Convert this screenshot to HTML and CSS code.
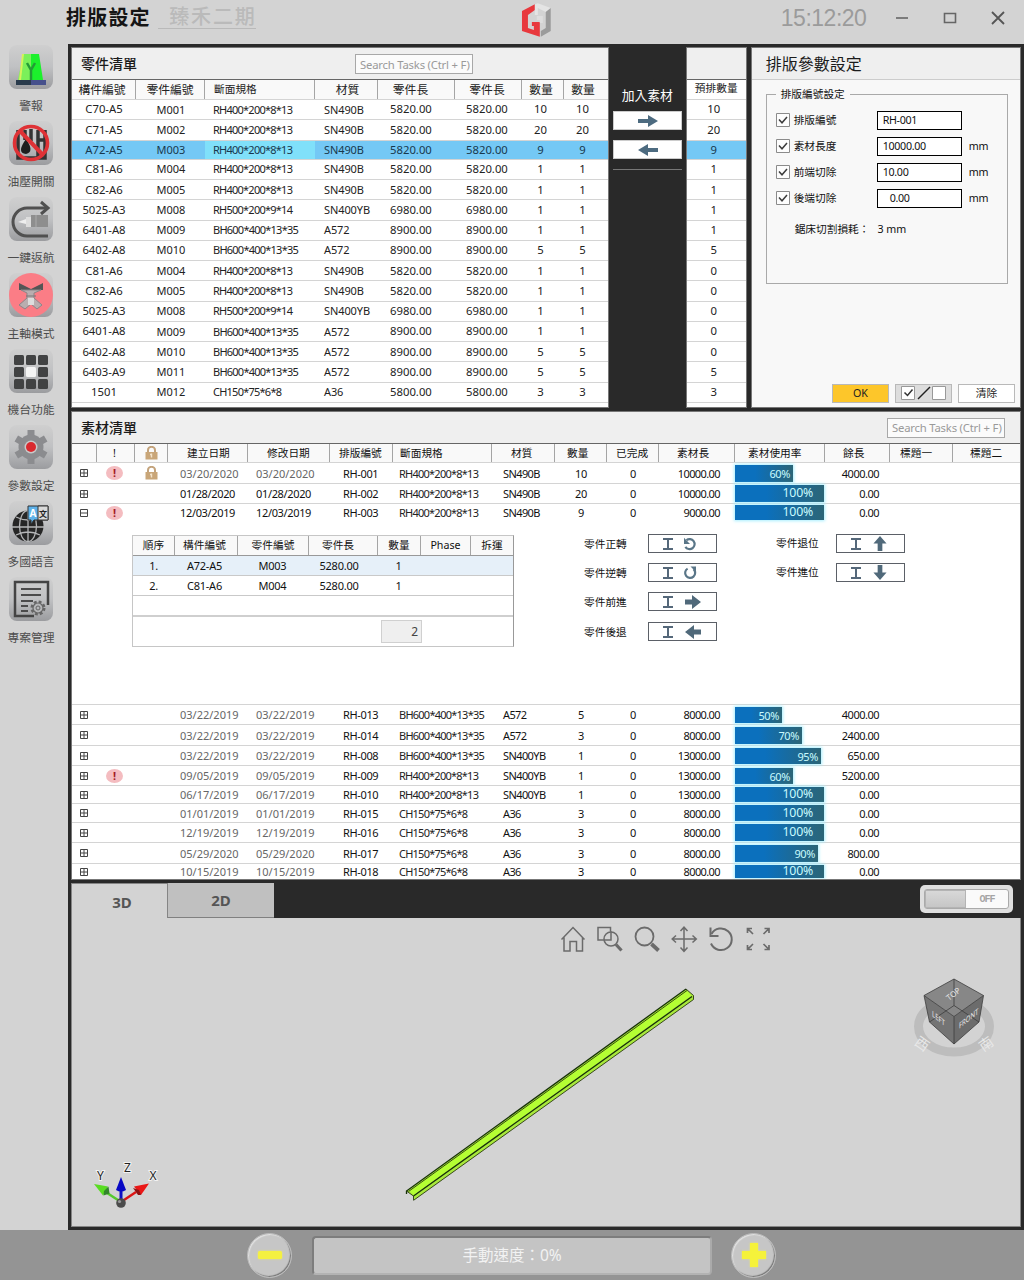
FILE: index.html
```html
<!DOCTYPE html>
<html lang="zh-Hant">
<head>
<meta charset="utf-8">
<title>排版設定</title>
<link rel="stylesheet" href="styles.css">
</head>
<body>
<svg class="defs" aria-hidden="true">
  <defs>
    <linearGradient id="chip" x1="0" y1="0" x2="0" y2="1"><stop offset="0" stop-color="#cfcfcf"/><stop offset=".5" stop-color="#c0c1c3"/><stop offset="1" stop-color="#9b9c9f"/></linearGradient>
    <symbol id="plus" viewBox="0 0 8 8"><path d="M.5 .5h7v7h-7zM.5 4h7M4 .5v7" fill="none" stroke="#444" stroke-width="1"/></symbol>
    <symbol id="minus" viewBox="0 0 8 8"><path d="M.5 .5h7v7h-7zM.5 4h7" fill="none" stroke="#444" stroke-width="1"/></symbol>
    <symbol id="lock" viewBox="0 0 13 14"><path d="M3 7V4a3.5 3.2 0 0 1 7 0v3" fill="none" stroke="#c3a37c" stroke-width="2"/><path d="M.5 6h12v7.5H.5z" fill="#c9a679"/><path d="M6.5 7.5v4M5 8.5h1.5" stroke="#f3e3cb" stroke-width="1.4"/></symbol>
    <symbol id="right" viewBox="0 0 20 12"><path d="M0 4h10V0l10 6-10 6V8H0z" fill="#4d6b80"/></symbol>
    <symbol id="left" viewBox="0 0 20 12"><path d="M20 4H10V0L0 6l10 6V8h10z" fill="#4d6b80"/></symbol>
    <symbol id="beam" viewBox="0 0 10 12"><path d="M0 1h10M0 11h10M5 1v10" fill="none" stroke="#55687a" stroke-width="2"/></symbol>
    <symbol id="ccw" viewBox="0 0 14 14"><path d="M3.500 3.200A5 5 0 1 1 2.400 9.800" fill="none" stroke="#5a7688" stroke-width="2.200"/><path d="M1 .8V7h6z" fill="#5a7688"/></symbol>
    <symbol id="cw" viewBox="0 0 14 14"><path d="M10.500 3.200A5 5 0 1 1 4.600 2.600" fill="none" stroke="#5a7688" stroke-width="2.200"/><path d="M7.500 .5H13v5.400z" fill="#5a7688"/></symbol>
    <symbol id="fwd" viewBox="0 0 16 14"><path d="M0 4.500h7V0l9 7-9 7V9.500H0z" fill="#50697a"/></symbol>
    <symbol id="back" viewBox="0 0 16 14"><path d="M16 4.500H9V0L0 7l9 7V9.500h7z" fill="#50697a"/></symbol>
    <symbol id="up" viewBox="0 0 14 16"><path d="M4.500 16V8H0l7-8 7 8H9.500v8z" fill="#50697a"/></symbol>
    <symbol id="down" viewBox="0 0 14 16"><path d="M4.500 0v8H0l7 8 7-8H9.500V0z" fill="#50697a"/></symbol>
    <symbol id="tick" viewBox="0 0 14 14"><path d="M.5 .5h13v13H.5z" fill="#fdfdfd" stroke="#8b8b8b"/><path d="M3 6.500l3 3.300 5-5.800" fill="none" stroke="#3c3c3c" stroke-width="1.500"/></symbol>
  </defs>
</svg>

<header class="titlebar">
  <h1>排版設定</h1>
  <span class="project">臻禾二期</span>
  <svg class="logo" viewBox="0 0 31 35"><path d="M14 1 1 8v20l18 6V19h-8v4h2v4l-6-2V12l7-5z" fill="#e8383d"/><path d="M14 1l3-1 13 5-5 4-8-4v7h-3z" fill="#e4e4e4"/><path d="M30 5v23l-10 6v-6l5-3V9z" fill="#9b9b9b"/><path d="M16 13h6v7h-3v-3h-3z" fill="#dedede"/></svg>
  <time class="clock">15:12:20</time>
  <svg class="winctl" viewBox="0 0 110 16"><path d="M0 8h12" stroke="#666" stroke-width="1.600"/><path d="M48.500 3.500h11v9h-11z" fill="none" stroke="#666" stroke-width="1.600"/><path d="M96 2l12 12M108 2L96 14" stroke="#555" stroke-width="1.800"/></svg>
</header>

<div class="workspace">
  <nav class="sidebar">
    <a><svg viewBox="0 0 44 44"><rect width="44" height="44" rx="8" fill="url(#chip)"/><path d="M14 9h8v26H9z" fill="#7bf05a"/><path d="M22 9h8l4 26H22z" fill="#1cf02c"/><path d="M14 9l-3 26" stroke="#d6f25a" stroke-width="2"/><path d="M22 35V24M18 18l4 7 4-7" fill="none" stroke="#249b36" stroke-width="2.500"/><path d="M7 35h30v5H7z" fill="#2a3b4c"/><path d="M22 35h15v5H22z" fill="#46508c"/></svg><span>警報</span></a>
    <a><svg viewBox="0 0 44 44"><rect width="44" height="44" rx="8" fill="url(#chip)"/><path d="M9 9v28h27V9M16 9v10M22 8v12M29 9v28M29 19h8" fill="none" stroke="#333" stroke-width="3.500"/><path d="M17 18q-10 14 0 15 9-2 0-15z" fill="#1e1e1e"/><circle cx="22" cy="22" r="16.500" fill="none" stroke="#df3236" stroke-width="3.600"/><path d="M11 10l23 24" stroke="#df3236" stroke-width="4"/></svg><span>油壓開關</span></a>
    <a><svg viewBox="0 0 44 44"><rect width="44" height="44" rx="8" fill="url(#chip)"/><path d="M39 39H18a14 14 0 0 1 0-28h20" fill="none" stroke="#505050" stroke-width="3"/><path d="M32 5l7 6-7 6" fill="none" stroke="#505050" stroke-width="3"/><path d="M9 25l8-3v5z" fill="#eee"/><path d="M17 20h5v10h-5z" fill="#ddd"/><path d="M22 18h17v12H22z" fill="#8e8e8e"/><path d="M27 18v12" stroke="#aaa"/></svg><span>一鍵返航</span></a>
    <a><svg viewBox="0 0 44 44"><rect width="44" height="44" rx="8" fill="url(#chip)"/><circle cx="22" cy="22" r="22" fill="#fb7d86"/><path d="M10 10l12 6 12-6v7H10z" fill="#555"/><path d="M12 17h20l-7 3v5l8 7-5 4-6-5-6 5-6-4 8-7v-5z" fill="#b9aeb0" stroke="#8d8588"/><path d="M17 23h10" stroke="#777"/><path d="M19 25h6v7h-6z" fill="#ddd"/></svg><span>主軸模式</span></a>
    <a><svg viewBox="0 0 44 44"><rect width="44" height="44" rx="8" fill="url(#chip)"/><g fill="#414243"><rect x="5" y="6" width="10" height="10" rx="1.500"/><rect x="17" y="6" width="10" height="10" rx="1.500"/><rect x="29" y="6" width="10" height="10" rx="1.500"/><rect x="5" y="18" width="10" height="10" rx="1.500"/><rect x="29" y="18" width="10" height="10" rx="1.500"/><rect x="5" y="30" width="10" height="10" rx="1.500"/><rect x="17" y="30" width="10" height="10" rx="1.500"/><rect x="29" y="30" width="10" height="10" rx="1.500"/></g><rect x="17" y="18" width="10" height="10" rx="1.500" fill="#f4f4f4"/></svg><span>機台功能</span></a>
    <a><svg viewBox="0 0 44 44"><rect width="44" height="44" rx="8" fill="url(#chip)"/><g fill="none" stroke="#8b8c8f" stroke-width="7"><path d="M22 5v34M7.300 13.500l29.400 17M7.300 30.500l29.400-17"/></g><circle cx="22" cy="22" r="12.500" fill="#8b8c8f"/><circle cx="22" cy="22" r="6.500" fill="#c9c9c9"/><circle cx="22" cy="22" r="5" fill="#d92a2f"/></svg><span>參數設定</span></a>
    <a><svg viewBox="0 0 44 44"><rect width="44" height="44" rx="8" fill="url(#chip)"/><circle cx="19" cy="25" r="15.500" fill="#262626"/><path d="M3 26h32M19 10v31M7 16q12 6 24 0M7 34q12-6 24 0" stroke="#b5b6b8" stroke-width="1.300" fill="none"/><ellipse cx="19" cy="25" rx="8.500" ry="15.500" fill="none" stroke="#b5b6b8" stroke-width="1.300"/><path d="M19 5h20v14H25l-3 4v-4h-3z" fill="#5fb2ea" stroke="#333"/><path d="M29 5h10v14H29z" fill="#d9d9d9" stroke="#333"/><text x="20.500" y="16" class="glyph light">A</text><text x="30" y="15.500" class="glyph cjk">文</text></svg><span>多國語言</span></a>
    <a><svg viewBox="0 0 44 44"><rect width="44" height="44" rx="8" fill="url(#chip)"/><path d="M39 28V5H6v34h19" fill="none" stroke="#444" stroke-width="2.500"/><path d="M12 12h20M12 18h20M12 24h12M12 29h7M12 34h7" stroke="#4b4b4b" stroke-width="1.800"/><circle cx="29" cy="31" r="6" fill="none" stroke="#666" stroke-width="3" stroke-dasharray="2.700 2"/><circle cx="29" cy="31" r="5" fill="#b5b6b8" stroke="#666" stroke-width="1.200"/><circle cx="29" cy="31" r="2" fill="none" stroke="#666"/></svg><span>専案管理</span></a>
  </nav>

  <main class="frame">
    <div class="top">
      <section class="panel parts">
        <div class="bar"><h2>零件清單</h2><input class="search" placeholder="Search Tasks (Ctrl + F)" size="1"></div>
        <div class="row head"><span>構件編號</span><span>零件編號</span><span>斷面規格</span><span>材質</span><span>零件長</span><span>零件長</span><span>數量</span><span>數量</span></div>
        <div class="rows">
          <div class="row"><span>C70-A5</span><span>M001</span><span>RH400*200*8*13</span><span>SN490B</span><span>5820.00</span><span>5820.00</span><span>10</span><span>10</span></div>
          <div class="row"><span>C71-A5</span><span>M002</span><span>RH400*200*8*13</span><span>SN490B</span><span>5820.00</span><span>5820.00</span><span>20</span><span>20</span></div>
          <div class="row sel"><span>A72-A5</span><span>M003</span><span>RH400*200*8*13</span><span>SN490B</span><span>5820.00</span><span>5820.00</span><span>9</span><span>9</span></div>
          <div class="row"><span>C81-A6</span><span>M004</span><span>RH400*200*8*13</span><span>SN490B</span><span>5820.00</span><span>5820.00</span><span>1</span><span>1</span></div>
          <div class="row"><span>C82-A6</span><span>M005</span><span>RH400*200*8*13</span><span>SN490B</span><span>5820.00</span><span>5820.00</span><span>1</span><span>1</span></div>
          <div class="row"><span>5025-A3</span><span>M008</span><span>RH500*200*9*14</span><span>SN400YB</span><span>6980.00</span><span>6980.00</span><span>1</span><span>1</span></div>
          <div class="row"><span>6401-A8</span><span>M009</span><span>BH600*400*13*35</span><span>A572</span><span>8900.00</span><span>8900.00</span><span>1</span><span>1</span></div>
          <div class="row"><span>6402-A8</span><span>M010</span><span>BH600*400*13*35</span><span>A572</span><span>8900.00</span><span>8900.00</span><span>5</span><span>5</span></div>
          <div class="row"><span>C81-A6</span><span>M004</span><span>RH400*200*8*13</span><span>SN490B</span><span>5820.00</span><span>5820.00</span><span>1</span><span>1</span></div>
          <div class="row"><span>C82-A6</span><span>M005</span><span>RH400*200*8*13</span><span>SN490B</span><span>5820.00</span><span>5820.00</span><span>1</span><span>1</span></div>
          <div class="row"><span>5025-A3</span><span>M008</span><span>RH500*200*9*14</span><span>SN400YB</span><span>6980.00</span><span>6980.00</span><span>1</span><span>1</span></div>
          <div class="row"><span>6401-A8</span><span>M009</span><span>BH600*400*13*35</span><span>A572</span><span>8900.00</span><span>8900.00</span><span>1</span><span>1</span></div>
          <div class="row"><span>6402-A8</span><span>M010</span><span>BH600*400*13*35</span><span>A572</span><span>8900.00</span><span>8900.00</span><span>5</span><span>5</span></div>
          <div class="row"><span>6403-A9</span><span>M011</span><span>BH600*400*13*35</span><span>A572</span><span>8900.00</span><span>8900.00</span><span>5</span><span>5</span></div>
          <div class="row"><span>1501</span><span>M012</span><span>CH150*75*6*8</span><span>A36</span><span>5800.00</span><span>5800.00</span><span>3</span><span>3</span></div>
        </div>
      </section>

      <div class="transfer">
        <p>加入素材</p>
        <button><svg><use href="#right"/></svg></button>
        <button><svg><use href="#left"/></svg></button>
        <hr>
      </div>

      <section class="panel planned">
        <div class="bar"></div>
        <div class="row head"><span>預排數量</span></div>
        <div class="rows">
          <div class="row"><span>10</span></div><div class="row"><span>20</span></div><div class="row sel"><span>9</span></div><div class="row"><span>1</span></div><div class="row"><span>1</span></div>
          <div class="row"><span>1</span></div><div class="row"><span>1</span></div><div class="row"><span>5</span></div><div class="row"><span>0</span></div><div class="row"><span>0</span></div>
          <div class="row"><span>0</span></div><div class="row"><span>0</span></div><div class="row"><span>0</span></div><div class="row"><span>5</span></div><div class="row"><span>3</span></div>
        </div>
      </section>

      <section class="panel params">
        <div class="bar"><h2>排版參數設定</h2></div>
        <fieldset>
          <legend>排版編號設定</legend>
          <label><svg><use href="#tick"/></svg><b>排版編號</b><i>RH-001</i></label>
          <label><svg><use href="#tick"/></svg><b>素材長度</b><i>10000.00</i><em>mm</em></label>
          <label><svg><use href="#tick"/></svg><b>前端切除</b><i>10.00</i><em>mm</em></label>
          <label><svg><use href="#tick"/></svg><b>後端切除</b><i class="inset">0.00</i><em>mm</em></label>
          <p><span>鋸床切割損耗：</span><span>3 mm</span></p>
        </fieldset>
        <div class="actions">
          <button class="ok">OK</button>
          <button class="all"><svg viewBox="0 0 46 15"><path d="M.5 .5h13v13H.5z" fill="#fff" stroke="#999"/><path d="M3.500 6.500l3 3 5-6" fill="none" stroke="#333" stroke-width="1.500"/><path d="M17 13L29 1" stroke="#222" stroke-width="1.400"/><path d="M31.500 .5h13v13h-13z" fill="#fff" stroke="#999"/></svg></button>
          <button>清除</button>
        </div>
      </section>
    </div>

    <section class="panel stock">
      <div class="bar"><h2>素材清單</h2><input class="search" placeholder="Search Tasks (Ctrl + F)" size="1"></div>
      <div class="row head"><span></span><span>!</span><span><svg class="lk"><use href="#lock"/></svg></span><span>建立日期</span><span>修改日期</span><span>排版編號</span><span>斷面規格</span><span>材質</span><span>數量</span><span>已完成</span><span>素材長</span><span>素材使用率</span><span>餘長</span><span>標題一</span><span>標題二</span></div>
      <div class="rows upper">
        <div class="row dim"><span><svg class="ex"><use href="#plus"/></svg></span><span><u>!</u></span><span><svg class="lk"><use href="#lock"/></svg></span><span>03/20/2020</span><span>03/20/2020</span><span>RH-001</span><span>RH400*200*8*13</span><span>SN490B</span><span>10</span><span>0</span><span>10000.00</span><span><s style="width:58px">60%</s></span><span>4000.00</span></div>
        <div class="row"><span><svg class="ex"><use href="#plus"/></svg></span><span></span><span></span><span>01/28/2020</span><span>01/28/2020</span><span>RH-002</span><span>RH400*200*8*13</span><span>SN490B</span><span>20</span><span>0</span><span>10000.00</span><span><s class="full" style="width:89px">100%</s></span><span>0.00</span></div>
        <div class="row"><span><svg class="ex"><use href="#minus"/></svg></span><span><u>!</u></span><span></span><span>12/03/2019</span><span>12/03/2019</span><span>RH-003</span><span>RH400*200*8*13</span><span>SN490B</span><span>9</span><span>0</span><span>9000.00</span><span><s class="full" style="width:89px">100%</s></span><span>0.00</span></div>
      </div>

      <div class="detail">
        <div class="nest">
          <div class="line th"><span>順序</span><span>構件編號</span><span>零件編號</span><span>零件長</span><span>數量</span><span>Phase</span><span>拆運</span></div>
          <div class="line on"><span>1.</span><span>A72-A5</span><span>M003</span><span>5280.00</span><span>1</span></div>
          <div class="line"><span>2.</span><span>C81-A6</span><span>M004</span><span>5280.00</span><span>1</span></div>
          <div class="line last"></div>
          <div class="sum"><span>2</span></div>
        </div>
        <div class="cmds">
          <div><span>零件正轉</span><button><svg class="bm"><use href="#beam"/></svg><svg class="rot"><use href="#ccw"/></svg></button></div>
          <div><span>零件逆轉</span><button><svg class="bm"><use href="#beam"/></svg><svg class="rot"><use href="#cw"/></svg></button></div>
          <div><span>零件前進</span><button><svg class="bm"><use href="#beam"/></svg><svg class="hor"><use href="#fwd"/></svg></button></div>
          <div><span>零件後退</span><button><svg class="bm"><use href="#beam"/></svg><svg class="hor"><use href="#back"/></svg></button></div>
        </div>
        <div class="cmds second">
          <div><span>零件退位</span><button><svg class="bm"><use href="#beam"/></svg><svg class="ver"><use href="#up"/></svg></button></div>
          <div><span>零件進位</span><button><svg class="bm"><use href="#beam"/></svg><svg class="ver"><use href="#down"/></svg></button></div>
        </div>
      </div>

      <div class="rows lower">
        <div class="row dim"><span><svg class="ex"><use href="#plus"/></svg></span><span></span><span></span><span>03/22/2019</span><span>03/22/2019</span><span>RH-013</span><span>BH600*400*13*35</span><span>A572</span><span>5</span><span>0</span><span>8000.00</span><span><s style="width:47px">50%</s></span><span>4000.00</span></div>
        <div class="row dim"><span><svg class="ex"><use href="#plus"/></svg></span><span></span><span></span><span>03/22/2019</span><span>03/22/2019</span><span>RH-014</span><span>BH600*400*13*35</span><span>A572</span><span>3</span><span>0</span><span>8000.00</span><span><s style="width:67px">70%</s></span><span>2400.00</span></div>
        <div class="row dim"><span><svg class="ex"><use href="#plus"/></svg></span><span></span><span></span><span>03/22/2019</span><span>03/22/2019</span><span>RH-008</span><span>BH600*400*13*35</span><span>SN400YB</span><span>1</span><span>0</span><span>13000.00</span><span><s style="width:86px">95%</s></span><span>650.00</span></div>
        <div class="row dim"><span><svg class="ex"><use href="#plus"/></svg></span><span><u>!</u></span><span></span><span>09/05/2019</span><span>09/05/2019</span><span>RH-009</span><span>RH400*200*8*13</span><span>SN400YB</span><span>1</span><span>0</span><span>13000.00</span><span><s style="width:58px">60%</s></span><span>5200.00</span></div>
        <div class="row dim"><span><svg class="ex"><use href="#plus"/></svg></span><span></span><span></span><span>06/17/2019</span><span>06/17/2019</span><span>RH-010</span><span>RH400*200*8*13</span><span>SN400YB</span><span>1</span><span>0</span><span>13000.00</span><span><s class="full" style="width:89px">100%</s></span><span>0.00</span></div>
        <div class="row dim"><span><svg class="ex"><use href="#plus"/></svg></span><span></span><span></span><span>01/01/2019</span><span>01/01/2019</span><span>RH-015</span><span>CH150*75*6*8</span><span>A36</span><span>3</span><span>0</span><span>8000.00</span><span><s class="full" style="width:89px">100%</s></span><span>0.00</span></div>
        <div class="row dim"><span><svg class="ex"><use href="#plus"/></svg></span><span></span><span></span><span>12/19/2019</span><span>12/19/2019</span><span>RH-016</span><span>CH150*75*6*8</span><span>A36</span><span>3</span><span>0</span><span>8000.00</span><span><s class="full" style="width:89px">100%</s></span><span>0.00</span></div>
        <div class="row dim"><span><svg class="ex"><use href="#plus"/></svg></span><span></span><span></span><span>05/29/2020</span><span>05/29/2020</span><span>RH-017</span><span>CH150*75*6*8</span><span>A36</span><span>3</span><span>0</span><span>8000.00</span><span><s style="width:83px">90%</s></span><span>800.00</span></div>
        <div class="row dim"><span><svg class="ex"><use href="#plus"/></svg></span><span></span><span></span><span>10/15/2019</span><span>10/15/2019</span><span>RH-018</span><span>CH150*75*6*8</span><span>A36</span><span>3</span><span>0</span><span>8000.00</span><span><s class="full" style="width:89px">100%</s></span><span>0.00</span></div>
      </div>
    </section>

    <div class="tabs">
      <div class="tab active">3D</div>
      <div class="tab">2D</div>
      <div class="toggle"><div><i></i><span>OFF</span></div></div>
    </div>

    <section class="view">
      <svg viewBox="72 918 948 308">
        <g fill="none" stroke="#6b6b6b" stroke-width="1.500">
          <path d="M561.500 939.500L573 927.500l11.500 12M564 937.500V951h6v-9.500h6.500V951h6v-13.500"/>
          <path d="M602 940h-4v-12.500h12.500v4M602 940h9v-8.500"/><circle cx="611" cy="939" r="7"/><path d="M616 944.500l5.500 6" stroke-width="3.200"/>
          <circle cx="644.500" cy="936.500" r="9" stroke-width="1.800"/><path d="M651.500 944l7 6.500" stroke-width="3.800"/>
          <path d="M684 927.500v23.500M672.500 939H696M680.500 931l3.500-3.800 3.500 3.800M680.500 947.500l3.500 3.800 3.500-3.800M676 935.500l-3.800 3.500 3.800 3.500M692.500 935.500l3.800 3.500-3.800 3.500"/>
          <path d="M711.500 934a10.800 10.800 0 1 1-.5 9.500" stroke-width="2"/><path d="M710.500 927.500v8.500h8" stroke-width="2"/>
          <path d="M747.500 933v-4.500h4.500M747.500 928.500l5.500 5.500M764.500 928.500h4.500v4.500M769 928.500l-5.500 5.500M747.500 945v4.500h4.500M747.500 949.500l5.500-5.500M764.500 949.500h4.500v-4.500M769 949.500l-5.500-5.500" stroke-width="1.700"/>
        </g>
        <path d="M406.500 1191L686 989l7.500 6.500v4L414 1200l-1-4z" fill="#a8e83c"/>
        <path d="M409.500 1190.500L686 990.500l5.500 5-278 200z" fill="#b4ff33"/>
        <path d="M406.500 1194v-3L686 989M413.500 1196L692 996.500" fill="none" stroke="#17300a" stroke-width="1.300"/>
        <path d="M408.500 1191.500L687 990.500M414 1200L693.500 999.500v-4L686 989M406.500 1191l7 5v4.500" fill="none" stroke="#28380e" stroke-width=".9"/>
        <ellipse cx="954" cy="1026.500" rx="35.500" ry="25.500" fill="none" stroke="#bdbdbd" stroke-width="9"/>
        <g class="compass"><text transform="translate(922 1044) rotate(35)" y="5">西</text><text transform="translate(986 1044) rotate(-35)" y="5">南</text></g>
        <path d="M954 979l29.500 16.500L954 1016.500l-30-21z" fill="#878787"/>
        <path d="M924 995.500l30 21v27.500l-24.500-22z" fill="#747474"/><path d="M983.500 995.500L954 1016.500v27.500l25-22z" fill="#6c6c6c"/>
        <path d="M954 979l29.500 16.500-4.500 26.500-25 22-24.500-22-5.500-26.500zM924 995.500l30 21 29.500-21M954 1016.500v27.500M954 979v26.500l-24.500 16.500M954 1005.500l25 16.500" fill="none" stroke="#3e3e3e" stroke-width=".8"/>
        <g class="cube"><text transform="translate(949 1001) rotate(-38)">TOP</text><text transform="matrix(.75 .6 0 1 932 1016)">LEFT</text><text transform="matrix(.75 -.6 0 1 959 1029)">FRONT</text></g>
        <path d="M121 1202l-17-11" stroke="#55c92d" stroke-width="2.500"/><path d="M94 1184l14 2.500-2 4-3 5z" fill="#59dc22"/><path d="M104 1191l4.500-4.500 1 7-6 2z" fill="#32852a"/>
        <path d="M121 1202l15-10" stroke="#dc1414" stroke-width="2.500"/><path d="M149 1183.500l-8 11.500-3-3.500-4-5z" fill="#ea1717"/><path d="M133 1188l5 7 3 0-2-5z" fill="#8f1111"/>
        <path d="M121 1202v-14" stroke="#0d0dc4" stroke-width="3"/><path d="M121 1177l5 13q-5 3-10 0z" fill="#0707c4"/>
        <circle cx="121" cy="1203" r="4.800" fill="#4b4b4b"/><circle cx="119.500" cy="1201.500" r="1.600" fill="#999"/>
        <g class="axis"><text x="97" y="1180">Y</text><text x="124" y="1172">Z</text><text x="149.500" y="1180">X</text></g>
      </svg>
    </section>
  </main>
</div>

<footer class="speed">
  <button class="knob"><svg viewBox="0 0 24 24"><rect x="0" y="8" width="24" height="8" rx="1.500" fill="#f4f042"/></svg></button>
  <div class="slider">手動速度：0%</div>
  <button class="knob"><svg viewBox="0 0 24 24"><path d="M0 8h8V0h8v8h8v8h-8v8H8v-8H0z" fill="#f5f23a"/></svg></button>
</footer>
</body>
</html>
```
FILE: styles.css
```css
* { box-sizing: border-box; }
body {
  margin: 0;
  width: 1024px;
  height: 1280px;
  display: flex;
  flex-direction: column;
  background: #d3d3d3;
  color: #222;
  font: 11.3px/1 "Noto Sans", "Noto Sans CJK TC", sans-serif;
  overflow: hidden;
}
h1, h2, p { margin: 0; font-weight: 400; }
button { font: inherit; color: inherit; padding: 0; margin: 0; display: flex; align-items: center; justify-content: center; }
i, em { font-style: normal; }
b { font-weight: 400; }
u, s { text-decoration: none; }
.defs { position: absolute; width: 0; height: 0; }

/* title bar */
.titlebar { height: 44px; display: flex; align-items: center; padding: 0 18px 8px 66px; }
.titlebar h1 { font-size: 20px; letter-spacing: 1.200px; color: #151515; font-weight: 700; width: 93px; }
.project { width: 98px; padding-left: 11px; font-size: 20px; letter-spacing: 1.900px; color: #bababa; font-weight: 500; border-bottom: 1px solid #b9b9b9; height: 21px; line-height: 18px; white-space: nowrap; }
.logo { width: 31px; height: 35px; margin-left: 265px; margin-top: 5px; }
.clock { margin-left: 229px; width: 88px; font: 23px/1 "Liberation Sans", sans-serif; letter-spacing: -.5px; color: #9b9b9b; }
.winctl { width: 110px; height: 16px; margin-left: 28px; flex: none; }

.workspace { flex: 1; display: flex; min-height: 0; }

/* sidebar */
.sidebar { width: 68px; padding-top: 1px; }
.sidebar a { display: flex; flex-direction: column; align-items: center; height: 76px; padding-right: 6px; color: #4d4d4d; font-size: 11.800px; }
.sidebar svg { width: 44px; height: 44px; flex: none; }
.sidebar span { margin-top: 11px; white-space: nowrap; }
.glyph { font: bold 10px "Noto Sans", "Noto Sans CJK TC", sans-serif; fill: #222; }
.glyph.light { fill: #fff; }
.glyph.cjk { font-size: 8px; }

/* frame and panels */
.frame { width: 956px; background: #292929; padding: 3px; display: flex; flex-direction: column; }
.panel { background: #fff; border: 1px solid #777; display: flex; flex-direction: column; overflow: hidden; }
.bar { height: 32px; flex: none; background: #efefef; border-bottom: 1px solid #666; display: flex; align-items: center; padding: 0 9px; }
.bar h2 { font-size: 14px; font-weight: 500; color: #1b1b1b; }
.search { width: 118px; height: 20px; padding: 0 0 0 4px; border: 1px solid #a8a8a8; background: #fbfbfb; font: 11.300px "Noto Sans", sans-serif; letter-spacing: -.2px; }
.search::placeholder { color: #9a9a9a; opacity: 1; }
.row { display: grid; border-bottom: 1px solid #d4d4d4; }
.row > span { display: flex; align-items: center; white-space: nowrap; min-width: 0; }
.row.head { height: 20px; background: #f9f9f9; }
.row.head > span + span { border-left: 1px solid #a5a5a5; }

.top { display: flex; height: 361px; }
.parts { width: 539px; }
.parts .search { margin-left: 218px; margin-top: 1px; }
.parts .row { grid-template-columns: 64px 69px 110px 63px 77px 67px 42px 45px; }
.parts .row.head { grid-template-columns: 63px 69px 110px 63px 77px 67px 42px 46px; font-size: 11.800px; }
.parts .head span { justify-content: center; }
.parts .head span:nth-child(1) { padding-right: 3px; }
.parts .head span:nth-child(3) { justify-content: flex-start; padding-left: 9px; font-size: 10.700px; }
.parts .head span:nth-child(4) { padding-left: 3px; }
.parts .head span:nth-child(5) { padding-right: 11px; }
.parts .head span:nth-child(6) { padding-right: 2px; }
.parts .head span:nth-child(7) { padding-right: 3px; }
.parts .head span:nth-child(8) { padding-right: 7px; }
.top .rows { height: 303px; display: flex; flex-direction: column; }
.top .rows .row { flex: 1; padding-bottom: 1px; }
.parts .rows span:nth-child(1) { justify-content: center; }
.parts .rows span:nth-child(2) { justify-content: center; padding-left: 1px; font-size: 11px; }
.parts .rows span:nth-child(3) { padding-left: 8px; font-size: 11px; letter-spacing: -.76px; }
.parts .rows span:nth-child(4) { padding-left: 9px; letter-spacing: -.1px; font-size: 11px; }
.parts .rows span:nth-child(5) { padding-left: 12px; }
.parts .rows span:nth-child(6) { padding-left: 11px; }
.parts .rows span:nth-child(7) { justify-content: center; padding-right: 5px; }
.parts .rows span:nth-child(8) { justify-content: center; padding-right: 8px; }
.top .rows .sel { background: #74c8f5; padding-bottom: 0; color: #17384e; }
.parts .rows .sel span:nth-child(3) { background: #80e0fa; }

.transfer { width: 77px; padding: 42px 4px 0; display: flex; flex-direction: column; align-items: center; }
.transfer p { color: #fff; font-size: 12.800px; line-height: 13px; margin-bottom: 9px; white-space: nowrap; }
.transfer button { width: 69px; height: 19px; background: #fff; border: 1px solid #ccc; margin-bottom: 10px; padding-left: 2px; }
.transfer button svg { width: 20px; height: 12px; }
.transfer hr { width: 69px; margin: 0; border: 0; border-top: 1px solid #777; }
.planned { width: 61px; }
.planned .head { font-size: 10.700px; background: #fff; }
.planned .head span { justify-content: center; padding-bottom: 2px; }
.planned .rows span { justify-content: center; padding-right: 5px; }

.params { width: 271px; margin-left: 4px; background: #f8f8f8; }
.params .bar { border-bottom-color: #ccc; padding-left: 14px; }
.params h2 { font-size: 16px; font-weight: 400; }
.params fieldset { margin: 8px 12px 0 14px; height: 196px; border: 1px solid #a9a9a9; padding: 7px 0 0 9px; color: #111; font-size: 10.700px; }
.params legend { padding: 0 5px; line-height: 12px; }
.params label { display: flex; align-items: center; height: 26px; }
.params label svg { width: 14px; height: 14px; }
.params label b { margin-left: 4px; width: 83px; }
.params label i { width: 85px; height: 19px; border: 1px solid #000; background: #fff; padding-left: 5px; line-height: 16px; letter-spacing: -.3px; }
.params label i.inset { padding-left: 12px; }
.params label em { margin-left: 7px; }
.params p { display: flex; gap: 8px; padding: 13px 0 0 19px; white-space: nowrap; }
.actions { margin-top: auto; display: flex; justify-content: flex-end; gap: 6px; padding: 0 5px 4px; }
.actions button { width: 57px; height: 19px; background: #fff; border: 1px solid #b9b9b9; font-size: 10.700px; }
.actions .ok { background: #fdc62a; }
.actions .all { background: #ddd; }
.actions .all svg { width: 46px; height: 15px; }

/* stock list */
.stock { height: 469px; flex: none; margin-top: 3px; font-size: 11px; color: #111; }
.stock .bar { padding-right: 15px; justify-content: space-between; }
.stock .row { grid-template-columns: 25px 38px 33px 80px 82px 63px 99px 63px 52px 52px 76px 90px 65px 63px 1fr; }
.stock .row.head { grid-template-columns: 24px 38px 33px 80px 82px 63px 99px 63px 52px 52px 76px 90px 65px 63px 1fr; height: 19px; font-size: 10.700px; }
.stock .head span:nth-child(2), .stock .head span:nth-child(3) { justify-content: center; }
.stock .head span:nth-child(2) { padding-right: 2px; }
.stock .head span:nth-child(4), .stock .head span:nth-child(5) { padding-left: 19px; }
.stock .head span:nth-child(6) { padding-left: 9px; }
.stock .head span:nth-child(7) { padding-left: 7px; }
.stock .head span:nth-child(8) { padding-left: 19px; }
.stock .head span:nth-child(9) { padding-left: 12px; }
.stock .head span:nth-child(10) { padding-left: 9px; }
.stock .head span:nth-child(11) { padding-left: 18px; }
.stock .head span:nth-child(12) { padding-left: 13px; }
.stock .head span:nth-child(13) { padding-left: 18px; }
.stock .head span:nth-child(14) { padding-left: 10px; }
.stock .head span:nth-child(15) { padding-left: 17px; }
.stock .rows { display: grid; flex: none; }
.upper { grid-template-rows: 21px 20px 17px; }
.upper .row:last-child { border-bottom: 0; }
.lower { grid-template-rows: 20px 21px 20px 20px 18px 19px 20px 21px 15px; border-top: 1px solid #d4d4d4; }
.lower .row:last-child { border-bottom: 0; }
.stock .rows span:nth-child(1) { padding-left: 8px; }
.stock .rows span:nth-child(2), .stock .rows span:nth-child(3) { justify-content: center; }
.stock .rows span:nth-child(2) { padding-right: 3px; }
.stock .rows span:nth-child(4) { padding-left: 12px; }
.stock .rows span:nth-child(5) { padding-left: 8px; }
.dim > span:nth-child(4), .dim > span:nth-child(5) { color: #666; }
.stock .rows .row:not(.dim) > span:nth-child(4), .stock .rows .row:not(.dim) > span:nth-child(5) { letter-spacing: -.35px; }
.stock .rows span:nth-child(6) { padding-left: 13px; letter-spacing: -.35px; }
.stock .rows span:nth-child(7) { padding-left: 6px; letter-spacing: -.76px; color: #222; }
.stock .rows span:nth-child(8) { padding-left: 11px; letter-spacing: -.6px; }
.stock .rows span:nth-child(9), .stock .rows span:nth-child(10) { justify-content: center; letter-spacing: -.3px; }
.stock .rows span:nth-child(11) { justify-content: flex-end; padding-right: 15px; letter-spacing: -.6px; }
.stock .rows span:nth-child(13) { justify-content: flex-end; padding-right: 11px; letter-spacing: -.5px; }
.ex { width: 8px; height: 8px; }
.lk { width: 13px; height: 14px; }
.stock u { width: 17px; height: 14px; border-radius: 50%; background: #f4bcc0; color: #a31b25; font-weight: 700; text-align: center; line-height: 13px; }
.stock s { align-self: stretch; margin: 2px 0 1px; padding-right: 3px; display: flex; align-items: center; justify-content: flex-end; color: #c9fbff; letter-spacing: -.4px; background: linear-gradient(90deg, #0b70bd 35%, #2b6577); box-shadow: 0 0 3px 1px #a9efff; }
.stock s.full { font-size: 12.300px; padding-right: 11px; margin: 1px 0; letter-spacing: -.2px; }

.detail { flex: 1; display: flex; align-items: flex-start; padding: 14px 0 0 60px; }
.nest { width: 382px; border: 1px solid #c6c6c6; border-right-color: #999; }
.line { display: grid; grid-template-columns: 41px 63px 71px 69px 43px 50px 43px; height: 20px; border-bottom: 1px solid #c9c9c9; letter-spacing: -.25px; }
.line span { display: flex; align-items: center; justify-content: center; padding-bottom: 1px; white-space: nowrap; }
.line:not(.th) span:nth-child(2) { padding-right: 2px; }
.line span:nth-child(4) { padding-right: 7px; }
.line.th { border-bottom-color: #999; background: #f9f9f9; font-size: 10.700px; letter-spacing: 0; }
.line.th span { padding-bottom: 0; }
.line.th span:nth-child(2) { padding-right: 3px; }
.line.th span + span { border-left: 1px solid #a5a5a5; }
.line.th span:nth-child(4) { padding-right: 10px; }
.line.on { background: #e6f0f9; }
.line.last { height: 21px; border-bottom: 2px solid #cfcfcf; }
.sum { height: 29px; padding: 3px 0 0 248px; }
.sum span { display: block; width: 41px; height: 23px; border: 1px solid #d0d0d0; background: #efefef; text-align: right; padding-right: 3px; line-height: 21px; color: #444; font-size: 12px; }
.cmds { display: flex; flex-direction: column; gap: 10px; margin: -1px 0 0 70px; font-size: 10.700px; }
.cmds.second { margin-left: 59px; }
.cmds div { display: flex; align-items: center; }
.cmds div:last-child:nth-child(4) { margin-top: 1px; }
.cmds span { width: 64px; padding-top: 1px; white-space: nowrap; }
.cmds.second span { width: 60px; padding-top: 0; }
.cmds button { width: 69px; height: 19px; border: 1px solid #5b6067; background: #fff; justify-content: flex-start; padding-left: 14px; }
.bm { width: 10px; height: 12px; margin-right: 10px; }
.rot { width: 14px; height: 14px; }
.hor { width: 16px; height: 14px; margin-left: 2px; }
.ver { width: 14px; height: 15px; margin-left: 2px; }

/* viewer */
.tabs { height: 38px; flex: none; display: flex; padding-top: 3px; }
.tab { display: flex; align-items: center; justify-content: center; width: 106px; font-size: 15px; font-weight: 700; color: #555; background: #c0c0c0; border-bottom: 1px solid #808080; }
.tab.active { width: 97px; background: #d3d3d3; border: solid #858585; border-width: 1px 1px 0; padding: 3px 0 0 5px; }
.toggle { margin: 2px 8px 0 auto; width: 93px; height: 28px; border-radius: 5px; background: #dfdfdf; padding: 4px; }
.toggle div { height: 20px; display: flex; border: 1px solid #aaa; border-radius: 3px; background: #fafafa; }
.toggle i { width: 41px; background: linear-gradient(#d8d8d8, #c6c6c6); border: 1px solid #b4b4b4; }
.toggle span { flex: 1; text-align: center; font: bold 10px/19px "Liberation Mono", monospace; color: #a5a5a5; letter-spacing: -1px; }
.view { flex: 1; min-height: 0; background: #d3d3d3; border: 1px solid #858585; border-top: 0; }
.view svg { display: block; width: 948px; height: 308px; }
.axis { font: 12px "Noto Sans", sans-serif; fill: #222; paint-order: stroke; stroke: #f2f2f2; stroke-width: 2px; }
.cube { font: 8px "Noto Sans", sans-serif; fill: #e8e8e8; }
.compass { font: 14px "Noto Sans CJK TC", sans-serif; fill: #e8e8e8; text-anchor: middle; }

/* speed bar */
.speed { height: 50px; background: #949494; display: flex; align-items: center; padding-left: 247px; }
.knob { width: 45px; height: 45px; border-radius: 50%; border: 1px solid #bbb; box-shadow: inset 1px 1px 1px #e2e2e2, inset -1px -1px 1px #777; background: #c6c6c6; }
.knob svg { width: 24px; height: 24px; filter: drop-shadow(0 0 1px #e8e578); }
.slider { width: 400px; height: 39px; margin: 1px 19px 0 20px; border-radius: 4px; border: 2px solid #7d7d7d; border-right-color: #aaa; border-bottom-color: #b3b3b3; background: #c4c4c4; color: #f2f2f2; font-size: 15.500px; display: flex; align-items: center; justify-content: center; }
```
